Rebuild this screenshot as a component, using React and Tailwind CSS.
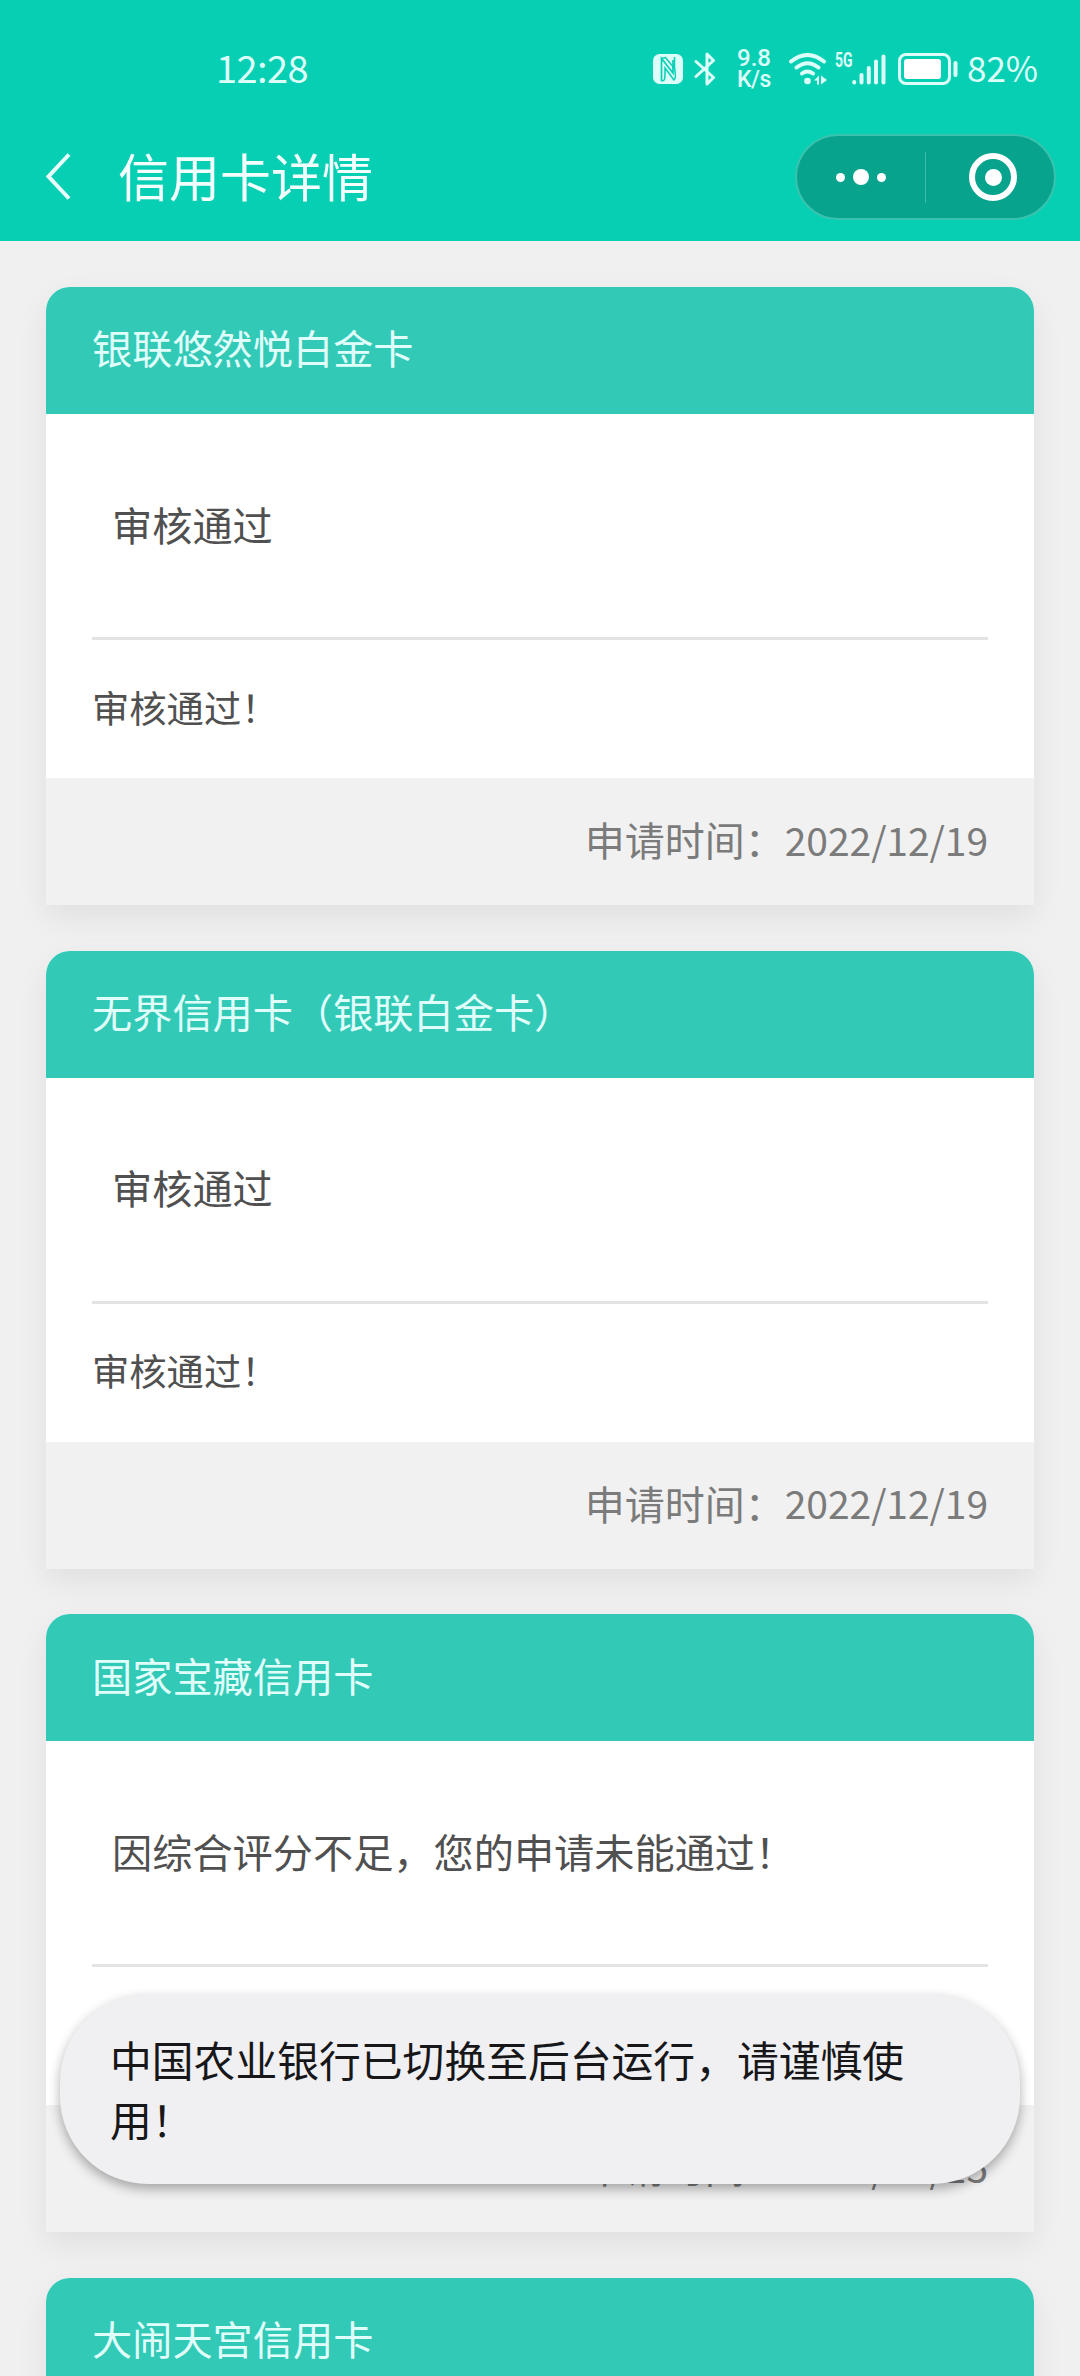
const cards = [
  { title: "银联悠然悦白金卡", status: "审核通过", note: "审核通过！", date: "2022/12/19" },
  { title: "无界信用卡（银联白金卡）", status: "审核通过", note: "审核通过！", date: "2022/12/19" },
  { title: "国家宝藏信用卡", status: "因综合评分不足，您的申请未能通过！", note: "", date: "2022/12/15" },
  { title: "大闹天宫信用卡", status: "", note: "", date: "" },
];

function StatusBar() {
  return (
    <div className="flex h-[138px] items-center pl-[216px] text-[#dcfff9]">
      <span className="w-[429px] pb-[5px] text-[38px] leading-none tracking-[-0.6px]">12:28</span>
      {/* phone state icons */}
      <svg className="ml-[8px] h-[30px] w-[30px] shrink-0" viewBox="0 0 30 30">
        <rect width="30" height="30" rx="6.5" fill="currentColor" />
        <path d="M8.500 27V4.500L20 19V6" fill="none" stroke="#07cfb3" strokeWidth="1.700" />
        <path d="M8.500 4.500L12.500 3.500L21.500 14.500V3M8.500 27C12.500 27 12 24 12 14L21 26C23.500 25 21.500 14 21.500 14" fill="none" stroke="#07cfb3" strokeWidth="1.500" />
      </svg>
      <svg className="ml-[11px] h-[34px] w-[22px] shrink-0" viewBox="0 0 22 34" fill="none" stroke="currentColor" strokeWidth="3" strokeLinejoin="round" strokeLinecap="round">
        <path d="M2 9.500L19.500 25.500L13 32V2L19.500 8.500L2 24.500" />
      </svg>
      <div className="ml-[20px] flex w-[36px] shrink-0 flex-col items-center font-[Roboto] text-[24px] leading-[21px] font-medium">
        <span>9.8</span>
        <span className="text-[23px] tracking-[-0.5px]">K/s</span>
      </div>
      <svg className="ml-[17px] h-[32px] w-[38px] shrink-0" viewBox="0 0 38 32" fill="none" stroke="currentColor" strokeWidth="3.900" strokeLinecap="round">
        <path d="M2 8.500Q18.500 -4.500 35 8.500M7.500 14.500Q18.500 6 29.500 14.500M13 20.500Q18.500 16.500 24 20.500" />
        <circle cx="18.500" cy="28" r="3.300" fill="currentColor" stroke="none" />
        <path d="M25 27.500L30 22.500V31.500H28V27.500ZM32 22.500L38 27L32 31.500Z" fill="currentColor" stroke="none" />
      </svg>
      <span className="mb-[18px] ml-[8px] w-[25px] origin-left scale-x-70 font-[Roboto] text-[20px] leading-none font-bold">5G</span>
      <svg className="ml-[-8px] h-[31px] w-[34px] shrink-0" viewBox="0 0 34 31" stroke="currentColor" strokeWidth="4" strokeLinecap="round">
        <path d="M2.200 28V28.500M9.500 21V28.500M16.800 14V28.500M24 7.500V28.500M31.500 2.500V28.500" />
      </svg>
      <svg className="ml-[12px] h-[32px] w-[60px] shrink-0" viewBox="0 0 60 32">
        <rect x="1.500" y="1.500" width="50" height="29" rx="6.500" fill="none" stroke="currentColor" strokeWidth="3" />
        <rect x="6" y="6" width="37" height="20" rx="3" fill="white" />
        <path d="M57.500 10V22" stroke="currentColor" strokeWidth="4" strokeLinecap="round" />
      </svg>
      <span className="ml-[9px] pb-[5px] text-[35px] leading-none">82%</span>
    </div>
  );
}

function NavBar() {
  return (
    <div className="flex h-[86px] items-center pr-[24px] pl-[44px]">
      <svg className="h-[48px] w-[28px]" viewBox="0 0 28 48" fill="none" stroke="#eafffc" strokeWidth="4">
        <path d="M25 1.500L4.500 23.500L25 45.500" />
      </svg>
      <h1 className="ml-[46px] pb-[4px] text-[51px] leading-none text-[#f2fffd]">信用卡详情</h1>
      <div className="ml-auto flex h-[86px] w-[261px] items-center rounded-full border-2 border-[#39c3ae] bg-[#07a38d]">
        <div className="flex w-[128px] items-center justify-center gap-[8px]">
          <i className="h-[9px] w-[9px] rounded-full bg-white" />
          <i className="h-[16px] w-[16px] rounded-full bg-white" />
          <i className="h-[9px] w-[9px] rounded-full bg-white" />
        </div>
        <div className="h-[51px] w-px bg-[#39bda9]" />
        <div className="ml-[43px] flex h-[48px] w-[48px] items-center justify-center rounded-full border-[6px] border-white">
          <i className="h-[17px] w-[17px] rounded-full bg-white" />
        </div>
      </div>
    </div>
  );
}

function Card({ title, status, note, date }) {
  return (
    <section className="mb-[45.6px] h-[618px] shrink-0 rounded-t-[24px] bg-white text-[40px] leading-none shadow-[0_12px_32px_rgba(0,0,0,0.07)]">
      <h2 className="flex h-[127px] items-center rounded-t-[24px] bg-[#32c9b7] px-[46px] pb-[6px] text-[40.200px] text-[#e0fffb]">{title}</h2>
      <div className="h-[364px] px-[46px] text-[#505050]">
        <div className="flex h-[226px] items-center border-b-[3px] border-[#e3e3e3] pb-[3px] pl-[20px] text-[40.200px]">{status}</div>
        <div className="flex h-[138px] items-center pb-[3px] text-[37.300px]">{note}</div>
      </div>
      <div className="flex h-[127px] items-center justify-end bg-[#f1f1f1] px-[46px] pb-[5px] text-[#7b7b7b]">
        <span>申请时间：</span>
        <span className="text-[39px] tracking-[-0.050px]">{date}</span>
      </div>
    </section>
  );
}

export default function App() {
  return (
    <div className="relative h-[2376px] w-[1080px] overflow-hidden bg-[#f0f0f0] font-['Noto_Sans_CJK_SC',sans-serif]">
      <header className="h-[241px] bg-[#07cfb3]">
        <StatusBar />
        <div className="mt-[-4px]">
          <NavBar />
        </div>
      </header>
      <main className="flex flex-col px-[46px] pt-[46px]">
        {cards.map((card) => (
          <Card key={card.title} {...card} />
        ))}
      </main>
      <div className="absolute top-[1994px] left-[60px] h-[190px] w-[960px] rounded-[88px] bg-[#f0f0f2] pt-[35px] pr-[90px] pl-[50px] text-[41.800px] leading-[60px] text-[#171719] shadow-[0_5px_12px_rgba(0,0,0,0.32)]">
        中国农业银行已切换至后台运行，请谨慎使用！
      </div>
    </div>
  );
}
